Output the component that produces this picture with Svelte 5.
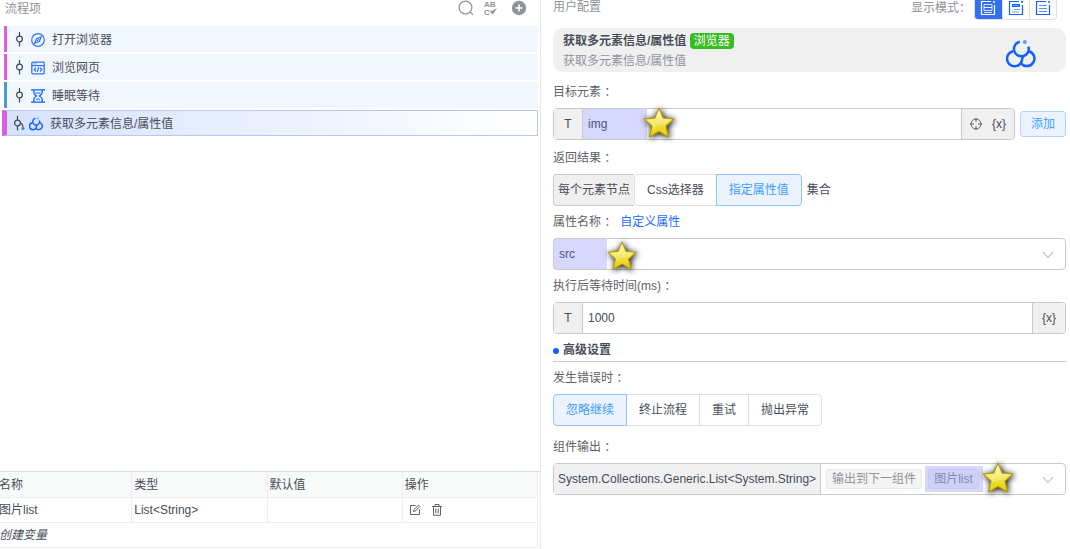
<script>
	let selected = $state(3)
	let mode = $state(0)
	let result = $state('指定属性值')
	let onError = $state('忽略继续')
	let target = $state('img')
	let wait = $state('1000')

	const steps = [
		{ name: '打开浏览器', icon: 'compass', color: '#d95fdc' },
		{ name: '浏览网页', icon: 'page', color: '#d95fdc' },
		{ name: '睡眠等待', icon: 'hourglass', color: '#4b9bdc' },
		{ name: '获取多元素信息/属性值', icon: 'rings', color: '#d95fdc' }
	]
	const modes = ['详细', '分组', '列表']
	const results = ['Css选择器', '指定属性值']
	const errors = ['忽略继续', '终止流程', '重试', '抛出异常']
	const columns = ['名称', '类型', '默认值', '操作']
	const variables = [{ name: '图片list', type: 'List<String>', value: '' }]
</script>

{#snippet rings()}
	<svg class="rings" viewBox="0 0 30 30" fill="none" stroke="#0f62fe" aria-hidden="true">
		<path d="M13.8 2.7A7.4 7.4 0 1 0 22.4 7.6" />
		<path d="M7 12.2A7.6 7.6 0 1 0 16.2 20Q16.2 18 17.8 16.6" />
		<path d="M23 12.2A7.6 7.6 0 1 1 15.2 24.6" />
		<circle cx="18.8" cy="3" r="2" fill="#5aa0ff" stroke="none" />
	</svg>
{/snippet}

{#snippet stepIcon(name)}
	{#if name === 'compass'}
		<svg width="14" height="14" viewBox="0 0 14 14" fill="none" stroke="#2b74f5" stroke-width="1.2" aria-hidden="true">
			<circle cx="7" cy="7" r="6.3" />
			<path d="M10.2 3.8 8.5 8.4 3.8 10.2 5.5 5.6Z" />
			<path d="M5.8 8.2 8.2 5.8" />
		</svg>
	{:else if name === 'page'}
		<svg width="14" height="14" viewBox="0 0 14 14" fill="none" stroke="#2b74f5" stroke-width="1.3" aria-hidden="true">
			<rect x=".8" y="1.2" width="12.4" height="11.6" rx=".8" />
			<path d="M1 4.6h12M2.5 2.9h1M4.5 2.9h1M5 6.7 3.2 8.6 5 10.5M9 6.7l1.8 1.9L9 10.5M7.7 6.3l-1.4 4.6" />
		</svg>
	{:else if name === 'hourglass'}
		<svg width="14" height="14" viewBox="0 0 14 14" fill="none" stroke="#0f62fe" stroke-width="1.3" aria-hidden="true">
			<path d="M0 .8h14M0 13.2h14M2.8 1v2.5Q3 5.6 5.6 7 3 8.4 2.8 10.5V13M11.2 1v2.5Q11 5.6 8.4 7q2.6 1.4 2.8 3.5V13" />
			<path d="M4.5 4h5M5 11Q7 8.2 9 11" stroke-width="1" />
		</svg>
	{:else}
		{@render rings()}
	{/if}
{/snippet}

{#snippet star()}
	<svg class="star" viewBox="0 0 34 34" aria-hidden="true">
		<defs>
			<linearGradient id="gold" x1="0" y1="0" x2="0" y2="1">
				<stop offset="0" stop-color="#fffbc0" />
				<stop offset=".45" stop-color="#f3e64c" />
				<stop offset="1" stop-color="#e6cc00" />
			</linearGradient>
		</defs>
		<path d="M17 2 21.2 12 32 12.9 24 20.2 26.6 31 17 25.6 7.4 31 10 20.2 2 12.9 12.8 12Z" fill="url(#gold)" stroke="#b39712" stroke-width="1.1" stroke-linejoin="round" />
		<path d="M17 4.5 20.5 13 29.3 13.7 23 18.5Q13 17.5 9.5 25.5L11.3 19.8 4.7 13.7 13.5 13Z" fill="#fff" opacity=".25" />
	</svg>
{/snippet}

{#snippet chevron()}
	<svg class="chevron" width="12" height="8" viewBox="0 0 12 8" fill="none" stroke="#c0c4cc" stroke-width="1.2" aria-hidden="true">
		<path d="M1 1.2 6 6.4 11 1.2" />
	</svg>
{/snippet}

<div class="layout">
	<section class="flow">
		<header class="bar">
			<span>流程项</span>
			<div class="tools">
				<button aria-label="搜索">
					<svg width="16" height="16" viewBox="0 0 16 16" fill="none" stroke="#909399" stroke-width="1.2"><circle cx="7.5" cy="7.5" r="6.4" /><path d="m12 12 3 2.8" /></svg>
				</button>
				<button aria-label="检查">
					<svg width="16" height="16" viewBox="0 0 16 16" fill="#909399">
						<text x="1" y="7" font-size="8" font-weight="bold">AB</text>
						<text x="1" y="15" font-size="8" font-weight="bold">C</text>
						<path d="m6.5 10.5 2.5.5 5-3-3.2 5.2-1.8 1Z" />
					</svg>
				</button>
				<button aria-label="添加步骤">
					<svg width="16" height="16" viewBox="0 0 16 16"><circle cx="8" cy="8" r="7.2" fill="#909399" /><path d="M8 4.5v7M4.5 8h7" stroke="#fff" stroke-width="1.6" /></svg>
				</button>
			</div>
		</header>

		<ul>
			{#each steps as step, i}
				<li>
					<button class="step" class:active={selected === i} style:border-left-color={step.color} onclick={() => (selected = i)}>
						<svg class="node" width="12" height="16" viewBox="0 0 12 16" fill="none" stroke="#404756" stroke-width="1.2" aria-hidden="true">
							<circle cx="4.5" cy="7" r="2.9" />
							<path d="M4.5 0v4M4.5 10v4.5" />
							{#if selected === i}
								<path d="M7.4 7q2.3.5 2.6 4.5" />
								<circle cx="10" cy="12.4" r="1.5" fill="#0f8cff" stroke="none" />
							{/if}
						</svg>
						{@render stepIcon(step.icon)}
						<span>{step.name}</span>
					</button>
				</li>
			{/each}
		</ul>

		<div class="variables">
			<table>
				<thead>
					<tr>
						{#each columns as column}
							<th>{column}</th>
						{/each}
					</tr>
				</thead>
				<tbody>
					{#each variables as variable}
						<tr>
							<td>{variable.name}</td>
							<td>{variable.type}</td>
							<td>{variable.value}</td>
							<td>
								<div class="actions">
									<button aria-label="编辑">
										<svg width="12" height="12" viewBox="0 0 12 12" fill="none" stroke="#606266"><path d="M6.5 1.5h-5v9h9v-5M4.5 7.5l.4-1.8L9.5 1.2l1.3 1.3-4.6 4.6Z" /></svg>
									</button>
									<button aria-label="删除">
										<svg width="12" height="12" viewBox="0 0 12 12" fill="none" stroke="#606266"><path d="M1 2.5h10M4 2.5v-2h4v2M2.5 2.5v8.8h7V2.5M4.8 4.5v5M7.2 4.5v5" /></svg>
									</button>
								</div>
							</td>
						</tr>
					{/each}
					<tr>
						<td colspan="4"><button class="create">创建变量</button></td>
					</tr>
				</tbody>
			</table>
		</div>
	</section>

	<section class="config">
		<header class="bar">
			<span class="title">用户配置</span>
			<div class="display">
				<span>显示模式：</span>
				<div class="modes">
					{#each modes as label, i}
						<button aria-label={label} class:on={mode === i} onclick={() => (mode = i)}>
							<svg width="16" height="16" viewBox="0 0 16 16" fill="none" stroke={mode === i ? '#fff' : '#0f62fe'}>
								<path d="M11 1.5H1.5v13h13V5" stroke-width="1.2" />
								<path d="M14 1v2" stroke-width="1.5" />
								{#if i === 0}
									<path d="M4 4.5h8v3H4zM4 7.5h8v3H4zM4 12.5h8" opacity=".8" />
								{:else if i === 1}
									<rect x="4.5" y="4.5" width="7" height="2" fill="#6aa0ff" />
									<path d="M6 9.5h6M4 12h7" opacity=".6" />
								{:else}
									<path d="M4 5.5h8M4 8.5h8M4 11.5h8" opacity=".7" />
								{/if}
							</svg>
						</button>
					{/each}
				</div>
			</div>
		</header>

		<div class="card">
			<div>
				<h1>获取多元素信息/属性值 <span class="badge">浏览器</span></h1>
				<p>获取多元素信息/属性值</p>
			</div>
			{@render rings()}
		</div>

		<label class="caption" for="target">目标元素 ：</label>
		<div class="row">
			<div class="field">
				<span class="addon type">T</span>
				<div class="value">
					<input id="target" type="text" bind:value={target} />
					<div class="mark">{@render star()}</div>
				</div>
				<div class="addon pick">
					<button aria-label="拾取元素">
						<svg width="12" height="12" viewBox="0 0 12 12" fill="none" stroke="#606266"><circle cx="6" cy="6" r="5" /><path d="M6 0v4M6 8v4M0 6h4M8 6h4" /></svg>
					</button>
					<button>{'{x}'}</button>
				</div>
			</div>
			<button class="add">添加</button>
		</div>

		<div class="caption spaced" id="result">返回结果 ：</div>
		<div class="row" role="radiogroup" aria-labelledby="result">
			<div class="joined">
				<span class="prefix">每个元素节点</span>
				<div class="options">
					{#each results as option}
						<label class:checked={result === option}>
							<input type="radio" name="result" value={option} bind:group={result} />{option}
						</label>
					{/each}
				</div>
			</div>
			<span>集合</span>
		</div>

		<div class="caption"><label for="attribute">属性名称 ：</label><a href="#custom">自定义属性</a></div>
		<div class="field">
			<div class="value">
				<select id="attribute">
					<option>src</option>
					<option>href</option>
				</select>
				<div class="mark narrow">{@render star()}</div>
				{@render chevron()}
			</div>
		</div>

		<label class="caption" for="wait">执行后等待时间(ms) ：</label>
		<div class="field">
			<span class="addon type">T</span>
			<div class="value"><input id="wait" type="text" bind:value={wait} /></div>
			<button class="addon insert">{'{x}'}</button>
		</div>

		<h2>高级设置</h2>

		<div class="caption" id="error">发生错误时 ：</div>
		<div class="row" role="radiogroup" aria-labelledby="error">
			<div class="options">
				{#each errors as option}
					<label class:checked={onError === option}>
						<input type="radio" name="error" value={option} bind:group={onError} />{option}
					</label>
				{/each}
			</div>
		</div>

		<div class="caption output" id="output">组件输出 ：</div>
		<div class="field">
			<span class="addon return">System.Collections.Generic.List&lt;System.String&gt;</span>
			<button class="value tags" role="combobox" aria-labelledby="output" aria-expanded="false" aria-controls="output">
				<span class="tag">输出到下一组件</span>
				<span class="tag picked">图片list<span class="mark">{@render star()}</span></span>
				{@render chevron()}
			</button>
		</div>
	</section>
</div>

<style>
	:global(body) {
		background: #fff;
	}

	.layout {
		display: grid;
		grid-template-columns: 541fr 529fr;
		min-height: 100vh;
		font: 12px/20px "Liberation Sans", "Noto Sans CJK SC", sans-serif;
		color: #484d59;
	}

	.layout * {
		box-sizing: border-box;
	}

	button, input, select {
		margin: 0;
		padding: 0;
		border: 0;
		background: none;
		font: inherit;
		color: inherit;
	}

	button {
		cursor: pointer;
	}

	svg {
		display: block;
		flex: none;
	}

	.bar {
		display: flex;
		justify-content: space-between;
		color: #909399;
	}

	.flow {
		display: flex;
		flex-direction: column;
		min-width: 0;
		padding-bottom: 1px;
		border-right: 1px solid #e8e8e8;
	}

	.flow .bar {
		height: 26px;
		padding: 0 13px 0 5px;
		line-height: 18px;
	}

	.tools {
		display: flex;
		gap: 12px;
		align-items: flex-start;
	}

	.tools button:first-child {
		margin-right: -3px;
	}

	ul {
		display: grid;
		gap: 2px;
		margin: 0;
		padding: 0 2px;
		list-style: none;
	}

	.step {
		display: flex;
		align-items: center;
		gap: 7px;
		width: calc(100% - 2px);
		height: 26px;
		margin-left: 2px;
		padding: 1px 0 0 8px;
		border-left: 3px solid;
		background: #f2f7ff;
		text-align: left;
	}

	.step .node {
		margin-right: -3px;
	}

	.step.active {
		width: 100%;
		margin-left: 0;
		padding-left: 6px;
		border: 1px solid #b3caf8;
		border-left-width: 5px;
		background: linear-gradient(90deg, #d6e2fd, #fff);
	}

	.rings {
		stroke-width: 2.5px;
	}

	.step .rings {
		width: 14px;
		height: 14px;
		stroke-width: 3px;
	}

	.variables {
		margin-top: auto;
		padding-right: 2px;
		overflow: hidden;
		border-top: 1px solid #dcdcdc;
	}

	table {
		width: calc(100% + 3px);
		margin-left: -3px;
		border-collapse: separate;
		border-spacing: 0;
		table-layout: fixed;
	}

	th, td {
		height: 25px;
		padding: 0 0 0 2px;
		border-right: 1px solid #eee;
		border-bottom: 1px solid #eee;
		font-weight: normal;
		text-align: left;
	}

	th {
		height: 26px;
		background: #f8faf9;
	}

	.actions {
		display: flex;
		gap: 10px;
		padding-left: 4px;
	}

	.create {
		font-style: italic;
	}

	.config {
		min-width: 0;
		padding: 0 4px 12px 12px;
	}

	.config .bar {
		height: 28px;
		line-height: 14px;
	}

	.display {
		display: flex;
		gap: 3px;
		margin-right: 9px;
		line-height: 16px;
	}

	.modes {
		display: flex;
		height: 20px;
		border: 1px solid #dcdfe6;
		border-top: 0;
		border-radius: 0 0 4px 4px;
		overflow: hidden;
	}

	.modes button {
		width: 27px;
		padding: 0 5px 3px;
	}

	.modes button + button {
		border-left: 1px solid #dcdfe6;
	}

	.modes .on {
		background: #336fee;
	}

	.card {
		display: flex;
		justify-content: space-between;
		align-items: center;
		height: 44px;
		margin-bottom: 10px;
		padding: 2px 30px 0 10px;
		border-radius: 10px;
		background: #f0f0f0;
	}

	.card .rings {
		width: 30px;
		height: 30px;
		margin-top: 6px;
	}

	h1, h2, p {
		margin: 0;
		font-size: 12px;
	}

	h1 {
		line-height: 20px;
	}

	p {
		color: #909399;
	}

	.badge {
		display: inline-block;
		padding: 0 4px;
		border-radius: 4px;
		background: #37bd22;
		color: #fff;
		font-weight: normal;
		line-height: 16px;
	}

	.caption {
		display: block;
		margin: 6px 0;
		padding-top: 1px;
		color: #606266;
		line-height: 19px;
	}

	.caption.spaced {
		margin-top: 8px;
	}

	.caption.output {
		margin-top: 11px;
	}

	a {
		margin-left: 4px;
		color: #1e6bff;
		text-decoration: none;
	}

	.row {
		display: flex;
		align-items: center;
		gap: 5px;
	}

	.field {
		display: flex;
		flex: 1;
		height: 32px;
		border: 1px solid #c9c9c9;
		border-radius: 4px;
	}

	.value {
		position: relative;
		flex: 1;
		min-width: 0;
	}

	.value input, .value select {
		width: 100%;
		height: 100%;
		padding: 0 5px;
		outline: none;
		appearance: none;
	}

	.addon {
		display: flex;
		align-items: center;
		justify-content: center;
		background: #f0f0f0;
		border-right: 1px solid #c9c9c9;
	}

	.type {
		width: 29px;
	}

	.return {
		padding: 0 4px;
	}

	.pick, .insert {
		border-right: 0;
		border-left: 1px solid #c9c9c9;
		border-radius: 0 3px 3px 0;
	}

	.pick {
		gap: 10px;
		padding: 0 8px;
	}

	.insert {
		width: 33px;
	}

	.add {
		width: 46px;
		height: 26px;
		border: 1px solid #b3d3ff;
		border-radius: 3px;
		background: #ecf3ff;
		color: #409eff;
	}

	.joined {
		display: flex;
	}

	.prefix {
		padding: 0 4px;
		border: 1px solid #c9c9c9;
		border-right: 0;
		border-radius: 4px 0 0 4px;
		background: #f0f0f0;
		line-height: 30px;
		white-space: nowrap;
	}

	.options {
		display: flex;
	}

	.options label {
		margin-left: -1px;
		padding: 0 12px;
		border: 1px solid #dcdfe6;
		line-height: 30px;
		white-space: nowrap;
		cursor: pointer;
	}

	.options label:first-child {
		margin-left: 0;
		border-radius: 4px 0 0 4px;
	}

	.options label:last-child {
		border-radius: 0 4px 4px 0;
	}

	.options .checked {
		z-index: 1;
		border-color: #8cc5ff;
		background: #ecf3ff;
		color: #409eff;
	}

	.options input {
		position: absolute;
		opacity: 0;
	}

	.chevron {
		position: absolute;
		right: 11px;
		top: 12px;
		pointer-events: none;
	}

	h2 {
		display: flex;
		align-items: center;
		gap: 4px;
		margin-top: 6px;
		border-bottom: 1px solid #c9c9c9;
		line-height: 21px;
	}

	h2::before {
		content: "";
		width: 6px;
		height: 6px;
		border-radius: 50%;
		background: #0f62fe;
	}

	.tags {
		display: flex;
		align-items: center;
		gap: 6px;
		padding-left: 5px;
	}

	.tag {
		padding: 0 5px;
		border: 1px solid #e9e9eb;
		border-radius: 3px;
		background: #f4f4f5;
		color: #909399;
		line-height: 18px;
		white-space: nowrap;
	}

	.picked {
		position: relative;
	}

	.mark {
		position: absolute;
		top: 0;
		bottom: 0;
		left: 0;
		width: 64px;
		background: rgba(99, 99, 255, 0.25);
		pointer-events: none;
	}

	.mark.narrow {
		width: 53px;
	}

	.picked .mark {
		top: -4px;
		bottom: -4px;
		left: -4px;
		width: 58px;
	}

	.star {
		position: absolute;
		left: calc(100% - 5px);
		top: -3px;
		width: 34px;
		height: 34px;
		filter: drop-shadow(1px 1px 3px #000);
	}

	.narrow .star {
		left: calc(100% - 1px);
		top: 1px;
		width: 32px;
		height: 32px;
	}

	.picked .star {
		left: calc(100% - 2px);
		top: -5px;
	}
</style>
